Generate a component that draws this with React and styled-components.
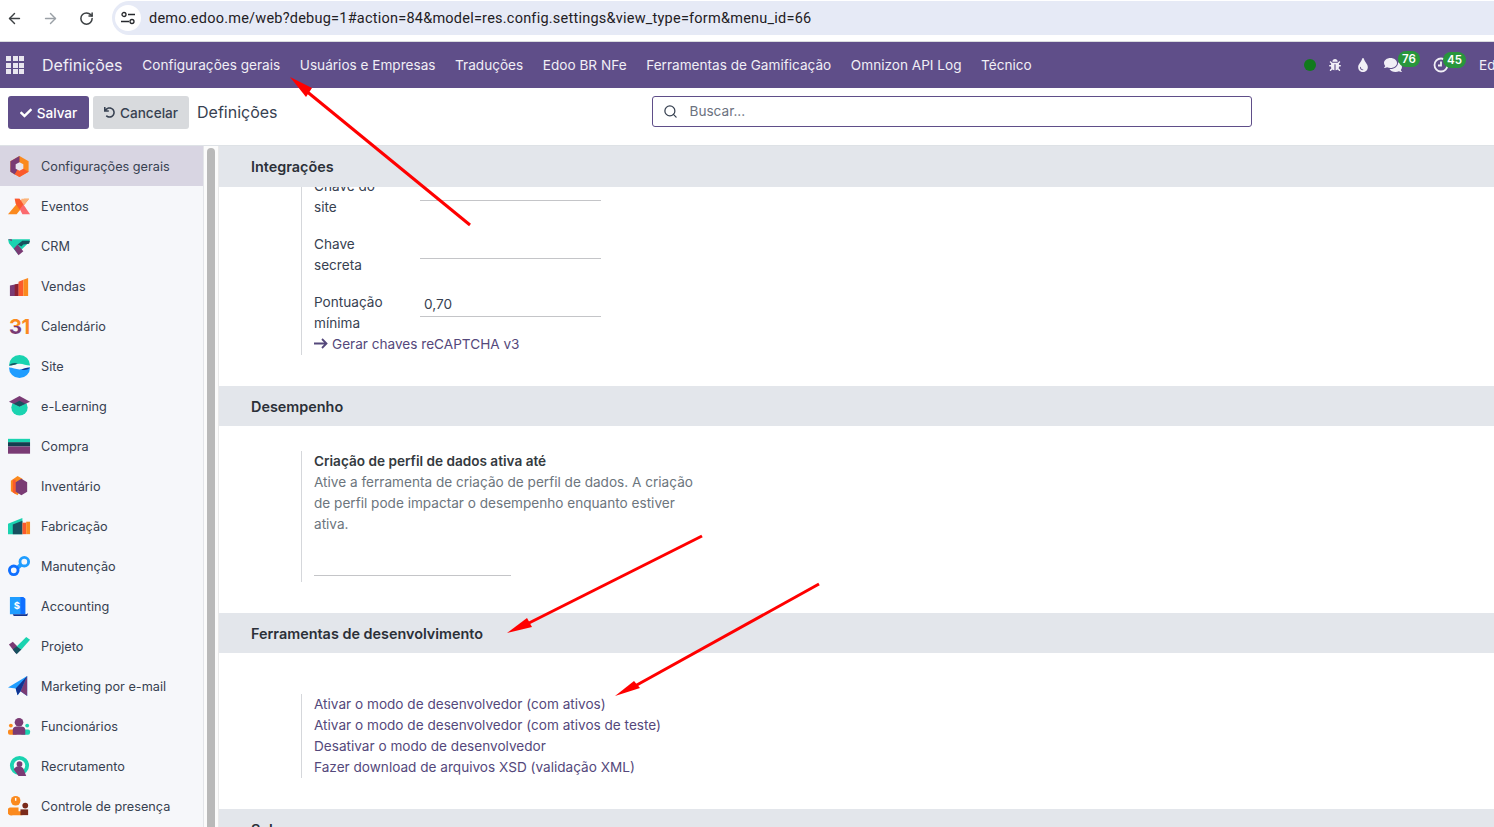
import React from 'react'
import styled, { createGlobalStyle } from 'styled-components'
import { FaBug, FaTint, FaComments, FaCheck, FaUndo } from 'react-icons/fa'
import { ArrowLeft, ArrowRight, RotateCw, Search } from 'lucide-react'

const GlobalStyle = createGlobalStyle`
  html, body { margin: 0; padding: 0; height: 100%; overflow: hidden; background: #fff; }
  body { font-family: Inter, "Noto Sans", sans-serif; font-size: 13.6px; line-height: 21px; color: #374151; }
  * { box-sizing: border-box; }
`

const Page = styled.div`
  position: relative;
  width: 100%;
  height: 827px;
  display: flex;
  flex-direction: column;
  overflow: hidden;
`

/* browser bar */
const BrowserBar = styled.div`
  height: 42px;
  flex: none;
  display: flex;
  align-items: flex-start;
  padding-top: 1px;
  background: #fff;
  border-bottom: 1px solid #d9dbdf;
`
const NavButtons = styled.div`
  width: 112px;
  height: 34px;
  flex: none;
  display: flex;
  align-items: center;
  gap: 19px;
  padding-left: 6px;
`
const NavBtn = styled.span`
  width: 17px;
  display: flex;
  justify-content: center;
  color: ${p => (p.$off ? '#9aa0a6' : '#3c4043')};
`
const UrlPill = styled.div`
  flex: 1;
  height: 34px;
  display: flex;
  align-items: center;
  gap: 8px;
  padding-left: 3px;
  background: #e6eaf6;
  border-radius: 17px 0 0 17px;
  font-family: Roboto, Inter, sans-serif;
  font-size: 14.5px;
  letter-spacing: 0.23px;
  color: #1f2024;
`
const TuneBadge = styled.span`
  width: 26px;
  height: 26px;
  border-radius: 50%;
  background: #fff;
  display: flex;
  align-items: center;
  justify-content: center;
`

/* odoo navbar */
const Navbar = styled.nav`
  height: 46px;
  flex: none;
  display: flex;
  align-items: center;
  background: #5f4e89;
  color: #f1eff6;
  white-space: nowrap;
  overflow: hidden;
`
const AppsGrid = styled.div`
  width: 18px;
  height: 18px;
  margin-left: 6px;
  display: grid;
  grid-template-columns: repeat(3, 5px);
  grid-auto-rows: 5px;
  gap: 1.5px;
  span { background: #e9e6f0; }
`
const Brand = styled.span`
  margin-left: 18px;
  margin-right: 10px;
  font-size: 16px;
`
const MenuItem = styled.span`
  padding: 0 9.8px;
  font-size: 13.6px;
`
const Systray = styled.div`
  margin-left: auto;
  width: 190px;
  flex: none;
  height: 100%;
  display: flex;
  align-items: center;
  color: #f1eff6;
`
const GreenDot = styled.span`
  width: 12px;
  height: 12px;
  flex: none;
  margin-right: 12px;
  border-radius: 50%;
  background: #117a1c;
`
const TrayIcon = styled.span`
  position: relative;
  flex: none;
  display: flex;
  align-items: center;
  justify-content: center;
  width: ${p => p.$w || 14}px;
  margin-right: ${p => p.$mr || 0}px;
`
const Badge = styled.span`
  position: absolute;
  left: ${p => p.$left}px;
  top: -5px;
  height: 16px;
  padding: 0 4px;
  border-radius: 8px;
  background: #28963c;
  color: #fff;
  font-size: 11.5px;
  font-weight: 600;
  line-height: 16px;
`

/* control panel */
const ControlPanel = styled.div`
  height: 58px;
  flex: none;
  display: flex;
  align-items: flex-start;
  padding: 8px 0 0 8px;
  background: #fff;
  border-bottom: 1px solid #dee2e6;
`
const Button = styled.button`
  height: 33px;
  display: flex;
  align-items: center;
  justify-content: center;
  gap: 5px;
  margin-right: 4px;
  border: 0;
  border-radius: 3px;
  padding: 0;
  width: ${p => p.$w}px;
  font-family: inherit;
  font-size: 13.6px;
  font-weight: 500;
  background: ${p => (p.$primary ? '#5f4e89' : '#d8dadd')};
  color: ${p => (p.$primary ? '#fff' : '#374151')};
`
const PanelTitle = styled.span`
  margin-left: 4px;
  font-size: 16px;
  line-height: 33px;
`
const SearchBox = styled.div`
  width: 600px;
  height: 31px;
  margin-left: 374px;
  display: flex;
  align-items: center;
  gap: 12px;
  padding-left: 10px;
  border: 1px solid #5f4e89;
  border-radius: 3px;
  color: #6b7280;
  font-size: 13.6px;
  line-height: 31px;
  svg { color: #374151; }
`

/* main */
const Main = styled.div`
  flex: 1;
  min-height: 0;
  display: flex;
`
const Sidebar = styled.aside`
  width: 204px;
  flex: none;
  background: #f6f7fa;
  border-right: 1px solid #e3e5e9;
  font-size: 12.7px;
`
const SideItem = styled.div`
  height: 40px;
  display: flex;
  align-items: center;
  gap: 10px;
  padding-left: 8px;
  background: ${p => (p.$active ? '#d8d5e2' : 'transparent')};
  color: #374151;
  white-space: nowrap;
`
const IconSlot = styled.svg`
  width: 23px;
  height: 23px;
  flex: none;
`
const Scrollbar = styled.div`
  width: 15px;
  flex: none;
  padding: 2px 3px 0;
  background: #fbfbfb;
  border-right: 1px solid #e9e9e9;
  div {
    height: 100%;
    width: 8px;
    border-radius: 4px 4px 0 0;
    background: #b9b9b9;
  }
`
const Content = styled.div`
  flex: 1;
  min-width: 0;
  overflow: hidden;
`
const SectionHead = styled.h2`
  margin: 0;
  height: ${p => p.$h || 40}px;
  display: flex;
  align-items: center;
  padding-left: 32px;
  background: #e3e6eb;
  color: #2b3038;
  font-size: 14.4px;
  font-weight: 600;
  overflow: hidden;
`
const SectionBody = styled.div`
  padding: ${p => p.$top || 0}px 0 31px 82px;
  overflow: hidden;
`
const Setting = styled.div`
  border-left: 1px solid #d5d7db;
  padding-left: 12px;
  padding-bottom: ${p => p.$pb || 0}px;
`
const Clip = styled.div`
  overflow: hidden;
`
const FieldRow = styled.div`
  display: flex;
  align-items: flex-start;
  margin-top: ${p => p.$mt || 0}px;
  margin-bottom: ${p => (p.$last ? 0 : 16)}px;
`
const FieldLabel = styled.label`
  width: 106px;
  flex: none;
  padding-right: 24px;
`
const FieldInput = styled.div`
  width: 181px;
  height: 25px;
  padding: 2px 4px 0;
  border-bottom: 1px solid #c4c5c8;
`
const TextLink = styled.a`
  display: block;
  color: #54487b;
`
const SettingTitle = styled.div`
  font-weight: 600;
  color: #343a40;
`
const Muted = styled.div`
  width: 385px;
  color: #6c757d;
`
const BlankInput = styled.div`
  width: 197px;
  height: 26px;
  margin-top: 15px;
  border-bottom: 1px solid #c4c5c8;
`
const Arrows = styled.svg`
  position: absolute;
  top: 0;
  left: 0;
  pointer-events: none;
`

const P = '#7a3b74', O = '#fb8a1e', R = '#fb5a2c', T = '#1ad3b0', D = '#17505f', B = '#1f9dff', N = '#13338f'

const icons = {
  settings: <>
    <path d="M12 1l9.500 5.500v11L12 23 2.500 17.500v-11z" fill={O} />
    <path d="M12 1L2.500 6.500v11l5 3L12 12z" fill={P} />
    <path d="M12 12l9.500 5.500L12 23l-5-3z" fill={R} />
    <path d="M12 7.500l4 2.250v4.500L12 16.500l-4-2.250v-4.500z" fill="#e9e6ef" />
  </>,
  eventos: <>
    <path d="M0 20L11 7l6-3h5L9 20z" fill={O} />
    <path d="M14 4h8L13 15z" fill="#fcb27a" />
    <path d="M7 4h5l11 16h-8z" fill="#fb6a6e" />
    <path d="M7 4h5l4 6-4 5-4-6z" fill={R} />
  </>,
  crm: <>
    <path d="M0 4.500h23l-1 3-8 8-4 4-4-5-5-6z" fill={T} />
    <path d="M6 14l4-4 6 7-5 4z" fill={P} />
    <path d="M10 10l5-4h8l-1 3-6 1-2 2z" fill={D} />
    <path d="M0 4.500h4v2z" fill={P} />
  </>,
  vendas: <>
    <path d="M2 11l9-2v13H2z" fill={P} />
    <path d="M7 10l4-1v13H7z" fill="#8b2132" />
    <path d="M11 7l5-2v17h-5z" fill={R} />
    <path d="M16 5l5-2v19h-5z" fill={O} />
  </>,
  calendario: <>
    <defs>
      <linearGradient id="calThree" x1="0" y1="0" x2="0" y2="1">
        <stop offset="0.45" stopColor={O} />
        <stop offset="0.45" stopColor={P} />
      </linearGradient>
    </defs>
    <text x="1" y="20" fontSize="21" fontWeight="700" fill="url(#calThree)" fontFamily="Inter, sans-serif">3</text>
    <text x="14" y="20" fontSize="21" fontWeight="700" fill={O} fontFamily="Inter, sans-serif">1</text>
  </>,
  site: <>
    <path d="M1 11a11 11 0 0122 0c-4 0-7-2-11-2s-7 2-11 2z" fill={T} />
    <path d="M1 11c3-3 7-3 9-2-3 1-6 2-9 2z" fill={D} />
    <path d="M1 13c4 0 7 2 11 2s7-2 11-2a11 11 0 01-22 0z" fill={B} />
    <path d="M23 13c-3 3-7 3-9 2 3-1 6-2 9-2z" fill={N} />
  </>,
  elearning: <>
    <circle cx="12" cy="13" r="8.500" fill={T} />
    <path d="M12 1L23 7l-11 5L1 7z" fill={P} />
    <path d="M6 9l6-3 6 3-6 3z" fill={D} />
  </>,
  compra: <>
    <rect x="0" y="4" width="23" height="3.500" fill={T} />
    <rect x="0" y="7.500" width="23" height="4.500" fill="#123f4f" />
    <rect x="0" y="12" width="23" height="7.500" fill={P} />
  </>,
  inventario: <>
    <path d="M10 1l5 3v8l-5 9-7-4V6z" fill={O} />
    <path d="M5 5h3v15l-3-2z" fill={R} />
    <path d="M14 4l6 3.500v10L14 21l-6-3.500v-10z" fill={P} />
  </>,
  fabricacao: <>
    <path d="M0 9L15 3v17H0z" fill={T} />
    <path d="M5 10l10-4v14H5z" fill={D} />
    <rect x="15" y="8" width="4" height="12" fill={R} />
    <rect x="19" y="7" width="4" height="13" fill={O} />
  </>,
  manutencao: <>
    <path d="M6 17L17 7" stroke={B} strokeWidth="4" />
    <circle cx="6" cy="16" r="4.500" fill="#f6f7fa" stroke="#0f6fff" strokeWidth="3" />
    <circle cx="17" cy="7" r="4.500" fill="#f6f7fa" stroke={B} strokeWidth="3" />
  </>,
  accounting: <>
    <path d="M2 2h12l4 2v16H2z" fill={B} />
    <path d="M13 2h3l2 2v16h-5z" fill="#0f6fff" />
    <path d="M5 20h14l2-1-1 3H6z" fill={N} />
    <text x="6" y="15" fontSize="10" fontWeight="700" fill="#fff" fontFamily="Inter, sans-serif">$</text>
  </>,
  projeto: <>
    <path d="M1 10l4-3 7 7-4 5z" fill={P} />
    <path d="M9 12L19 2l4 3-9 10z" fill={T} />
    <path d="M9 12l5 3-5 5-4-5z" fill={D} />
  </>,
  marketing: <>
    <path d="M0 13L20 1v21l-7-5-3 4-2-7z" fill={B} />
    <path d="M20 1v21l-7-5z" fill={P} />
    <path d="M20 1L8 14l2 7 3-4z" fill={N} />
  </>,
  funcionarios: <>
    <circle cx="3" cy="11" r="2" fill={O} />
    <circle cx="20" cy="11" r="2" fill={T} />
    <rect x="0" y="15" width="10" height="5.500" rx="2" fill={O} />
    <rect x="13" y="15" width="10" height="5.500" rx="2" fill={T} />
    <circle cx="11.500" cy="7.500" r="4.500" fill={P} />
    <path d="M5 15a4 4 0 014-3h5a4 4 0 014 3v5.500H5z" fill={P} />
  </>,
  recrutamento: <>
    <circle cx="12" cy="11" r="8" fill="none" stroke={T} strokeWidth="4" />
    <circle cx="12" cy="9.500" r="3" fill={P} />
    <path d="M6 15a6 6 0 0110-1l3 8h-8z" fill={P} />
  </>,
  presenca: <>
    <circle cx="8" cy="6" r="5" fill={O} />
    <path d="M8 3v3" stroke="#fff" strokeWidth="1.500" />
    <path d="M2 13h9v4h4v4H5a4 4 0 01-3-8z" fill={O} />
    <circle cx="18" cy="11" r="3" fill="#7a2a1a" />
    <path d="M13 15h8v6h-8z" fill="#7a2a1a" />
  </>,
}

const sideItems = [
  ['settings', 'Configurações gerais'],
  ['eventos', 'Eventos'],
  ['crm', 'CRM'],
  ['vendas', 'Vendas'],
  ['calendario', 'Calendário'],
  ['site', 'Site'],
  ['elearning', 'e-Learning'],
  ['compra', 'Compra'],
  ['inventario', 'Inventário'],
  ['fabricacao', 'Fabricação'],
  ['manutencao', 'Manutenção'],
  ['accounting', 'Accounting'],
  ['projeto', 'Projeto'],
  ['marketing', 'Marketing por e-mail'],
  ['funcionarios', 'Funcionários'],
  ['recrutamento', 'Recrutamento'],
  ['presenca', 'Controle de presença'],
]

const menu = ['Configurações gerais', 'Usuários e Empresas', 'Traduções', 'Edoo BR NFe', 'Ferramentas de Gamificação', 'Omnizon API Log', 'Técnico']

export default function App() {
  return (
    <Page>
      <GlobalStyle />
      <BrowserBar>
        <NavButtons>
          <NavBtn><ArrowLeft size={17} strokeWidth={2} /></NavBtn>
          <NavBtn $off><ArrowRight size={17} strokeWidth={2} /></NavBtn>
          <NavBtn><RotateCw size={15} strokeWidth={2.400} /></NavBtn>
        </NavButtons>
        <UrlPill>
          <TuneBadge>
            <svg width="16" height="14" viewBox="0 0 16 14" fill="none" stroke="#26282c" strokeWidth="1.300">
              <circle cx="4" cy="3.500" r="2" />
              <path d="M8 3.500h7M1 10.500h8" />
              <circle cx="12" cy="10.500" r="2" />
            </svg>
          </TuneBadge>
          demo.edoo.me/web?debug=1#action=84&model=res.config.settings&view_type=form&menu_id=66
        </UrlPill>
      </BrowserBar>

      <Navbar>
        <AppsGrid>{Array.from({ length: 9 }).map((_, i) => <span key={i} />)}</AppsGrid>
        <Brand>Definições</Brand>
        {menu.map(m => <MenuItem key={m}>{m}</MenuItem>)}
        <Systray>
          <GreenDot />
          <TrayIcon $mr={14}><FaBug size={12} /></TrayIcon>
          <TrayIcon $mr={14}><FaTint size={14} /></TrayIcon>
          <TrayIcon $w={18} $mr={31}><FaComments size={18} /><Badge $left={14}>76</Badge></TrayIcon>
          <TrayIcon $w={16} $mr={30}>
            <svg width="16" height="16" viewBox="0 0 16 16" fill="none" stroke="#f1eff6" strokeWidth="1.800">
              <circle cx="8" cy="8" r="6.500" />
              <path d="M8 4.500V8.500H5" />
            </svg>
            <Badge $left={10}>45</Badge>
          </TrayIcon>
          <span>Ed</span>
        </Systray>
      </Navbar>

      <ControlPanel>
        <Button $primary $w={81}><FaCheck size={12} />Salvar</Button>
        <Button $w={96}><FaUndo size={11} />Cancelar</Button>
        <PanelTitle>Definições</PanelTitle>
        <SearchBox><Search size={15} strokeWidth={2} />Buscar...</SearchBox>
      </ControlPanel>

      <Main>
        <Sidebar>
          {sideItems.map(([key, label], i) => (
            <SideItem key={key} $active={i === 0}>
              <IconSlot viewBox="0 0 24 24">{icons[key]}</IconSlot>
              {label}
            </SideItem>
          ))}
        </Sidebar>
        <Scrollbar><div /></Scrollbar>
        <Content>
          <SectionHead $h={41}>Integrações</SectionHead>
          <SectionBody>
            <Setting>
              <Clip>
                <FieldRow $mt={-11}>
                  <FieldLabel>Chave do site</FieldLabel>
                  <FieldInput />
                </FieldRow>
                <FieldRow>
                  <FieldLabel>Chave secreta</FieldLabel>
                  <FieldInput />
                </FieldRow>
                <FieldRow $last>
                  <FieldLabel>Pontuação mínima</FieldLabel>
                  <FieldInput>0,70</FieldInput>
                </FieldRow>
                <TextLink>
                  <svg width="14" height="11" viewBox="0 0 14 11" fill="none" stroke="#54487b" strokeWidth="1.800" style={{ marginRight: 4 }}>
                    <path d="M0 5.500h12M8 1l4.500 4.500L8 10" />
                  </svg>
                  Gerar chaves reCAPTCHA v3
                </TextLink>
              </Clip>
            </Setting>
          </SectionBody>

          <SectionHead>Desempenho</SectionHead>
          <SectionBody $top={25}>
            <Setting $pb={6}>
              <SettingTitle>Criação de perfil de dados ativa até</SettingTitle>
              <Muted>Ative a ferramenta de criação de perfil de dados. A criação de perfil pode impactar o desempenho enquanto estiver ativa.</Muted>
              <BlankInput />
            </Setting>
          </SectionBody>

          <SectionHead>Ferramentas de desenvolvimento</SectionHead>
          <SectionBody $top={41}>
            <Setting>
              <TextLink>Ativar o modo de desenvolvedor (com ativos)</TextLink>
              <TextLink>Ativar o modo de desenvolvedor (com ativos de teste)</TextLink>
              <TextLink>Desativar o modo de desenvolvedor</TextLink>
              <TextLink>Fazer download de arquivos XSD (validação XML)</TextLink>
            </Setting>
          </SectionBody>

          <SectionHead>Sobre</SectionHead>
        </Content>
      </Main>

      <Arrows width="1494" height="827" viewBox="0 0 1494 827">
        <g stroke="#ff0000" strokeWidth="3" fill="#ff0000">
          <path d="M470 225L305 90" />
          <path d="M702 536L525 625" />
          <path d="M819 584L635 686" />
        </g>
        <g fill="#ff0000">
          <path d="M290 77L312 88 306 97z" />
          <path d="M507 633L527 618 532 627z" />
          <path d="M615 696L634 681 640 688z" />
        </g>
      </Arrows>
    </Page>
  )
}
